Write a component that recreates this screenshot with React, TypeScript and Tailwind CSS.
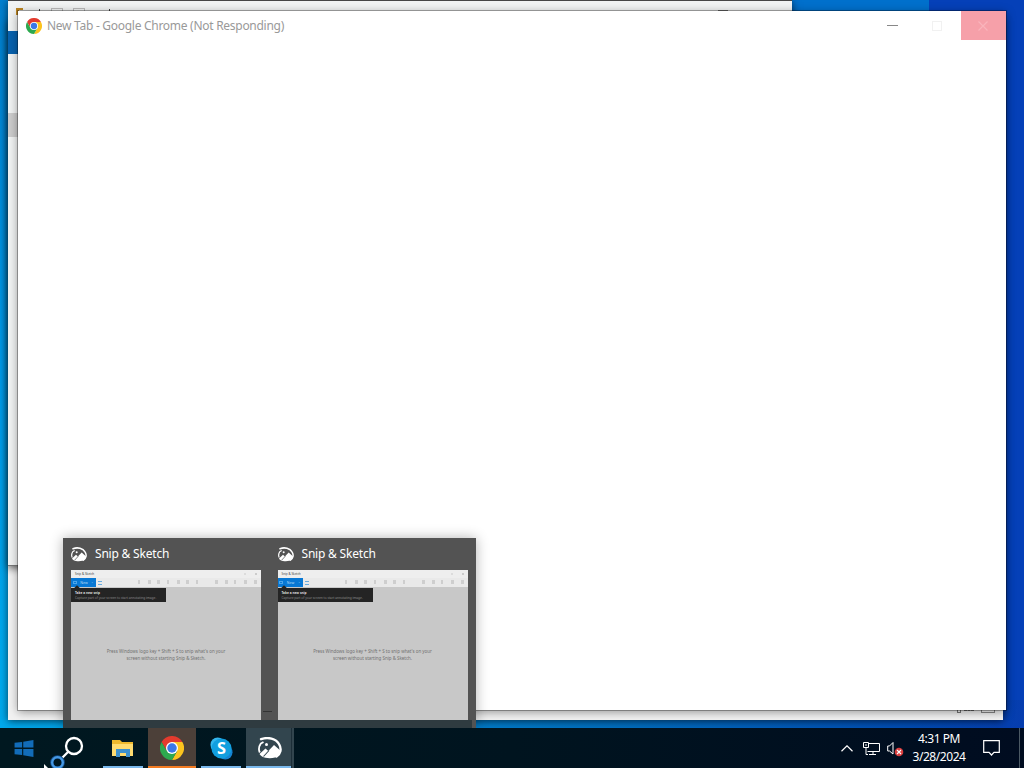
import React from "react";
import { clsx } from "clsx";

const ChromeIcon = ({ className }: { className: string }) => (
  <svg viewBox="0 0 48 48" className={className}>
    <path d="M24 12 H44.8 A24 24 0 0 0 3.2 12 L13.6 30 Z" fill="#e33b2e" />
    <path d="M34.4 30 L24 48 A24 24 0 0 0 44.8 12 H24 Z" fill="#fcc31e" />
    <path d="M13.6 30 L3.2 12 A24 24 0 0 0 24 48 L34.4 30 Z" fill="#2da94f" />
    <circle cx="24" cy="24" r="12" fill="white" />
    <circle cx="24" cy="24" r="9.5" fill="#3b78e7" />
  </svg>
);

const SnipIcon = ({ className, cut }: { className: string; cut: string }) => (
  <svg viewBox="0 0 24 22" className={className} fill="none">
    <path d="M3 2.2 C10 -0.3 18 1.5 21 7 C24 12 22.5 17 18.5 19.5" stroke="white" strokeWidth="2.4" strokeLinecap="round" />
    <path d="M2.8 6.5 C0.8 9.5 0.6 13 1.8 15.5 M2.5 6.8 L5.5 5" stroke="white" strokeWidth="1.8" />
    <path d="M1.5 17 L7.5 11.5 L10.3 14 L16 8 L22.3 13.5 C22 17 20 19.5 17 20.5 C13 21.6 7 21.3 4 19.5 C2.8 18.8 2 18 1.5 17 Z" fill="white" />
    <circle cx="8.5" cy="7.5" r="1.5" fill="white" />
    <path d="M5.5 19.5 L11 13.5" stroke={cut} strokeWidth="1.1" />
  </svg>
);

const toolMarks = [67, 77, 86, 96, 106, 115, 125, 144, 154, 163, 173, 183];

const Preview = () => (
  <div className="w-[207px] pl-2">
    <div className="flex h-8 items-center gap-2">
      <SnipIcon className="h-[15px] w-4" cut="#535353" />
      <span className="text-[12px] tracking-[-0.2px] text-white">Snip &amp; Sketch</span>
    </div>
    <div className="relative h-[150px] w-[190px] overflow-hidden bg-[#c8c8c8]">
      <div className="h-2 bg-[#eeeeee] pl-1 text-[3px] leading-[8px] text-[#444]">Snip &amp; Sketch</div>
      <div className="flex h-[9px] bg-[#e9e9e9]">
        <div className="flex w-[25px] items-center justify-around bg-[#0878d4] text-[3.5px] text-[#b9dcf7]">
          <span className="h-[3px] w-1 border-[0.5px] border-[#4ba5ea]" />
          <span>New</span>
          <span className="text-[3px]">⌄</span>
        </div>
        <div className="ml-0.5 mt-[3px] h-1 w-1 border-y border-[#67abdf]" />
      </div>
      {/* faint drawing tools */}
      {toolMarks.map((left, i) => (
        <span key={left} className={clsx("absolute top-[10px] h-1 bg-[#cecece]", i % 3 === 0 ? "w-0.5" : "w-[3px]")} style={{ left }} />
      ))}
      <span className="absolute left-[173px] top-[3px] size-0.5 bg-[#dcdcdc]" />
      <span className="absolute left-[184px] top-[3px] size-0.5 bg-[#cccccc]" />
      <div className="absolute left-1 top-4 size-1 rotate-45 bg-[#242424]" />
      <div className="mt-px h-[14px] w-[95px] bg-[#242424] pl-1 pt-[3px] text-[3.2px] leading-[4.5px] text-[#8c8c8c]">
        <div className="font-bold text-[#dedede]">Take a new snip</div>
        <div className="whitespace-nowrap">Capture part of your screen to start annotating image.</div>
      </div>
      <p className="mt-[46px] text-center text-[4.45px] leading-[7px] text-[#707070]">
        Press Windows logo key + Shift + S to snip what's on your
        <br />
        screen without starting Snip &amp; Sketch.
      </p>
    </div>
  </div>
);

const DesktopWindows = () => (
  <>
    <div className="absolute left-0 top-0 h-[728px] w-6 bg-gradient-to-b from-[#0280d0] via-[#009bea] to-[#00adf0]" />
    <div className="absolute left-[780px] top-0 h-8 w-[149px] bg-[#0070cc]" />
    <div className="absolute left-0 top-[700px] h-7 w-full bg-gradient-to-r from-[#00a9ed] via-[#006fc0] via-60% to-[#063daf]" />

    <div className="absolute left-2 top-5 h-[700px] w-[995px] bg-[#f2f2f2] shadow-[0_1px_8px_rgba(0,0,0,.65)]">
      <div className="absolute bottom-[7px] right-[8px] flex items-end gap-[7px]">
        <span className="h-[5px] w-1 border border-[#777]" />
        <span className="-ml-1 h-[3px] w-[10px] border-t border-dashed border-[#777]" />
        <span className="h-[5px] w-[14px] border border-[#888]" />
      </div>
    </div>
    <div className="absolute left-2 top-0 h-[566px] w-[784px] border-b border-t border-b-[#777] border-t-[#464646] bg-[#f1f3f3] shadow-[0_2px_8px_rgba(0,0,0,.65)]">
      <div className="absolute left-2 top-[7px] size-[7px] border-l-[3px] border-t-2 border-[#bc8522]" />
      <div className="absolute left-[31px] top-2 h-2 w-px bg-[#444]" />
      <div className="absolute left-[43px] top-[7px] h-2 w-3 border border-[#bbb]" />
      <div className="absolute left-[65px] top-[7px] h-2 w-3 border border-[#bbb]" />
      <div className="absolute left-[101px] top-2 h-2 w-px bg-[#444]" />
      <div className="absolute left-[710px] top-[9px] h-px w-[10px] bg-[#777]" />
      <div className="absolute top-[30px] h-[23px] w-3 bg-[#0862ae]" />
      <div className="absolute top-[112px] h-6 w-3 bg-[#cccccc]" />
    </div>

    <div className="absolute left-[18px] top-[11px] h-[699px] w-[988px] bg-white shadow-[0_0_0_1px_rgba(0,0,0,.3),0_2px_9px_rgba(0,0,0,.4)]">
      <div className="flex h-[29px] items-center pl-2">
        <ChromeIcon className="size-4" />
        <span className="ml-[5px] text-[12px] tracking-[-0.28px] text-[#999]">New Tab - Google Chrome (Not Responding)</span>
        <div className="ml-auto flex h-full items-center">
          <span className="mr-[34px] h-px w-[11px] bg-[#888]" />
          <span className="mr-[19px] size-[10px] border border-[#f1f1f1]" />
          <div className="flex h-full w-[45px] items-center justify-center bg-[#f6a0a9]">
            <svg viewBox="0 0 10 10" className="mr-px size-[10px]">
              <path d="M0.5 0.5 L9.5 9.5 M9.5 0.5 L0.5 9.5" stroke="#f9b4bb" strokeWidth="1.2" />
            </svg>
          </div>
        </div>
      </div>
    </div>
  </>
);

const TaskButton = ({ children, bg, line }: { children: React.ReactNode; bg?: string; line: string }) => (
  <div className={clsx("relative flex h-10 w-12 items-center justify-center", bg)}>
    {children}
    <span className={clsx("absolute bottom-0 h-0.5", line)} />
  </div>
);

const Taskbar = () => (
  <div className="absolute bottom-0 left-0 flex h-10 w-full bg-gradient-to-r from-[#001820] via-[#00141f] to-[#000c20]">
    <div className="flex w-12 items-center justify-center">
      <svg viewBox="0 0 20 18" className="h-[17px] w-5">
        <path d="M0 3 L8 2 V8 H0 Z M9.2 1.8 L20 0 V8 H9.2 Z M0 9.5 H8 V16 L0 15 Z M9.2 9.5 H20 V18 L9.2 16.2 Z" fill="#126cb8" />
      </svg>
    </div>
    <div className="w-[51px]">
      <svg viewBox="0 0 51 40" className="h-10 w-[51px]" fill="none">
        <circle cx="26" cy="18" r="8" stroke="white" strokeWidth="2.3" />
        <path d="M20 24 L14 30" stroke="white" strokeWidth="2.3" />
        <circle cx="9.5" cy="34.5" r="5.6" stroke="#164e89" strokeWidth="3.5" />
        <circle cx="9.5" cy="34.5" r="5.4" stroke="#4699e4" strokeWidth="2.2" />
      </svg>
    </div>
    <TaskButton line="left-1 w-10 bg-[#79b8ec]">
      <svg viewBox="0 0 22 18" className="h-[18px] w-[22px]">
        <path d="M0 1 H8 L10 3 H21 V17 H0 Z" fill="#eeb92e" />
        <path d="M0 5 H21 V17 H0 Z" fill="#ffdc70" />
        <path d="M4 18 V10 H18 V18 H14 V14 H8 V18 Z" fill="#3d91ce" />
      </svg>
    </TaskButton>
    <div className="ml-px flex">
      <TaskButton bg="bg-[#4c4039]" line="left-0 w-12 bg-[#f37b22]">
        <ChromeIcon className="size-6" />
      </TaskButton>
      <TaskButton line="left-[5px] w-10 bg-[#79b8ec]">
        <svg viewBox="0 0 24 24" className="ml-0.5 size-[23px]">
          <circle cx="8" cy="8" r="7.5" fill="#35b7ed" />
          <circle cx="16" cy="16" r="7.5" fill="#1484d3" />
          <circle cx="12" cy="12" r="10.5" fill="#129fdf" />
          <text x="12" y="18" textAnchor="middle" fill="white" className="font-['Open_Sans',sans-serif] text-[17px] font-bold">S</text>
        </svg>
      </TaskButton>
      <TaskButton bg="ml-0.5 bg-[#32454e]" line="left-0 w-[45px] bg-[#79b8ec]">
        <SnipIcon className="h-[22px] w-6" cut="#32454e" />
        <span className="absolute right-[2px] top-0 h-full w-px bg-[#1c2e38]" />
      </TaskButton>
    </div>

    <div className="ml-auto flex h-full items-center text-white">
      <svg viewBox="0 0 12 7" className="mr-[10px] h-[7px] w-3" fill="none">
        <path d="M0.5 6.2 L6 0.8 L11.5 6.2" stroke="white" strokeWidth="1.2" />
      </svg>
      <svg viewBox="0 0 17 15" className="mr-[7px] h-[15px] w-[17px]" fill="none" stroke="white" strokeWidth="1">
        <path d="M5 2.5 H16.5 V10.5 H4.5 M10 10.5 V13.5 M6 13.5 H13 M3 6.5 V13.5 H5 M0.5 1.5 H5.5 V6.5 H0.5 Z M2 4 H4" />
      </svg>
      <svg viewBox="0 0 17 17" className="h-[17px] w-[17px]" fill="none">
        <path d="M0.7 6 H2.5 L6 2.5 V14 L2.5 11 H0.7 Z" stroke="white" />
        <circle cx="12" cy="12" r="4.3" fill="#d93e3e" />
        <path d="M10 10 L14 14 M14 10 L10 14" stroke="white" strokeWidth="1.1" />
      </svg>
      <div className="w-[70px] text-center text-[12px] leading-[18px] tracking-[-0.45px]">
        <div>4:31 PM</div>
        <div>3/28/2024</div>
      </div>
      <svg viewBox="0 0 17 16" className="ml-[9px] mr-[19px] h-4 w-[17px]" fill="none">
        <path d="M0.7 0.7 H16.3 V12.3 H11 L8.5 15 L6 12.3 H0.7 Z" stroke="white" strokeWidth="1.2" />
      </svg>
      <span className="mr-1 h-full w-px bg-[#4b5964]" />
    </div>
  </div>
);

const App = () => (
  <div className="relative h-[768px] w-[1024px] overflow-hidden bg-[#0540b8] font-['Noto_Sans','Open_Sans',sans-serif]">
    <DesktopWindows />
    <div className="absolute left-[63px] top-[538px] flex h-[190px] w-[413px] bg-[#535353] shadow-[0_0_12px_rgba(0,0,0,.3)]">
      <Preview />
      <Preview />
      <span className="absolute left-[200px] top-[173px] h-px w-[9px] bg-[#333]" />
      <div className="absolute bottom-0 left-0 h-2 w-[409px] bg-[#2f3b40]" />
    </div>
    <Taskbar />
    <svg viewBox="0 0 4 4" className="absolute left-11 top-[764px] size-1">
      <path d="M0 0 L4 4 H0 Z" fill="white" />
    </svg>
  </div>
);

export default App;
